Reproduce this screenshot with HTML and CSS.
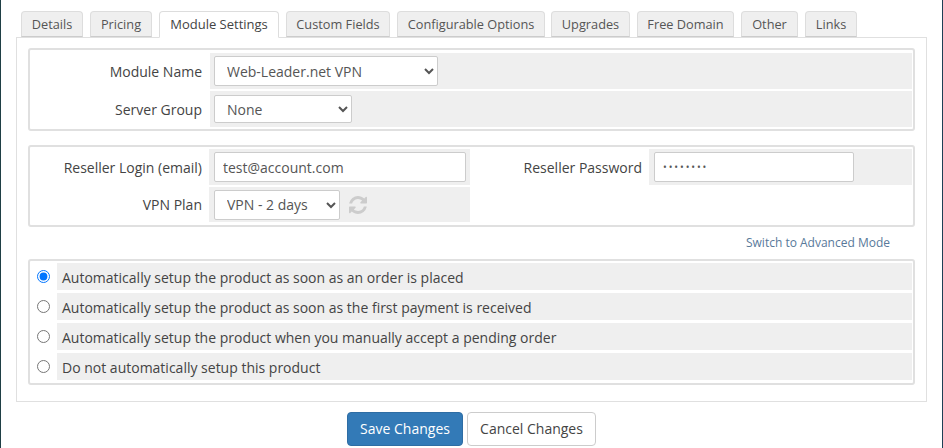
FILE: index.html
```html
<!DOCTYPE html>
<html lang="en">
<head>
<meta charset="utf-8">
<title>Module Settings</title>
<link rel="stylesheet" href="styles.css">
</head>
<body>
<div class="page">
  <ul class="tabs">
    <li class="tab t-details">Details</li>
    <li class="tab t-pricing">Pricing</li>
    <li class="tab active t-module">Module Settings</li>
    <li class="tab t-custom">Custom Fields</li>
    <li class="tab t-config">Configurable Options</li>
    <li class="tab t-upgrades">Upgrades</li>
    <li class="tab t-free">Free Domain</li>
    <li class="tab t-other">Other</li>
    <li class="tab t-links">Links</li>
  </ul>
  <div class="panel">
    <div class="box form-one">
      <div class="label">Module Name</div>
      <div class="field"><select class="sel sel-module"><option>Web-Leader.net VPN</option></select></div>
      <div class="label">Server Group</div>
      <div class="field"><select class="sel sel-group"><option>None</option></select></div>
    </div>
    <div class="box form-two">
      <div class="label">Reseller Login (email)</div>
      <div class="field"><input class="inp inp-login" type="text" value="test@account.com"></div>
      <div class="label">Reseller Password</div>
      <div class="field"><input class="inp inp-pass" type="password" value="password"></div>
      <div class="label">VPN Plan</div>
      <div class="field plan">
        <select class="sel sel-plan"><option>VPN - 2 days</option></select>
        <svg class="refresh" viewBox="0 0 1536 1536" aria-hidden="true"><path d="M1511 928q0 5-1 7-64 268-268 434.500T764 1536q-146 0-282.500-55T238 1324l-129 129q-19 19-45 19t-45-19-19-45V960q0-26 19-45t45-19h448q26 0 45 19t19 45-19 45l-137 137q71 66 161 102t187 36q134 0 250-65t186-179q11-17 53-117 8-23 30-23h192q13 0 22.500 9.500t9.500 22.500zm25-800v448q0 26-19 45t-45 19h-448q-26 0-45-19t-19-45 19-45l138-138Q969 256 768 256q-134 0-250 65T332 500q-11 17-53 117-8 23-30 23H50q-13 0-22.500-9.500T18 608v-7q65-268 270-434.500T768 0q146 0 284 55.500T1297 212l130-129q19-19 45-19t45 19 19 45z"/></svg>
      </div>
    </div>
    <div class="switch"><a href="#">Switch to Advanced Mode</a></div>
    <div class="box radios">
      <div class="r-cell"><input type="radio" name="auto" checked></div>
      <div class="r-text">Automatically setup the product as soon as an order is placed</div>
      <div class="r-cell"><input type="radio" name="auto"></div>
      <div class="r-text">Automatically setup the product as soon as the first payment is received</div>
      <div class="r-cell"><input type="radio" name="auto"></div>
      <div class="r-text">Automatically setup the product when you manually accept a pending order</div>
      <div class="r-cell"><input type="radio" name="auto"></div>
      <div class="r-text">Do not automatically setup this product</div>
    </div>
  </div>
  <div class="actions">
    <button class="btn primary" type="button">Save Changes</button>
    <button class="btn" type="button">Cancel Changes</button>
  </div>
</div>
</body>
</html>
```
FILE: styles.css
```css
* { box-sizing: border-box; }
html, body { margin: 0; padding: 0; height: 100%; background: #fff; overflow: hidden; }
body { font-family: "Open Sans", "Liberation Sans", sans-serif; font-size: 14px; color: #444; }
.page {
  height: 448px;
  border-left: 1px solid #1f3f45;
  border-right: 1px solid #1f3f55;
  padding: 11px 15px 0 15px;
}
.tabs { list-style: none; margin: 0; padding: 0 0 0 5px; display: flex; gap: 7px; height: 27px; position: relative; z-index: 1; }
.tab {
  height: 26px;
  border: 1px solid #ddd;
  border-bottom-color: #ccc;
  border-radius: 4px 4px 0 0;
  background: #efefef;
  color: #555;
  font-size: 12.75px;
  line-height: 25px;
  text-align: center;
}
.tab.active { background: #fff; height: 27px; border-bottom-color: #fff; color: #444; font-size: 13px; }
.t-details { width: 62px; }
.t-pricing { width: 62px; }
.t-module { width: 120px; }
.t-custom { width: 104px; }
.t-config { width: 148px; margin-right: -1px; }
.t-upgrades { width: 79px; }
.t-free { width: 97px; }
.t-other { width: 57px; }
.t-links { width: 52px; }
.panel {
  height: 365px;
  margin-top: -1px;
  border: 1px solid #e0e0e0;
  padding: 10px 11px 0;
}
.box { border: 2px solid #e0e0e0; border-radius: 3px; background: #fff; width: 887px; padding: 3px 1px 0 0; }
.form-one { height: 83px; display: grid; grid-template-columns: 178px 1fr; grid-template-rows: 36px 36px; row-gap: 2px; }
.form-two {
  height: 82px;
  margin-top: 14px;
  padding-top: 2px;
  display: grid;
  grid-template-columns: 177px 263px 177px 1fr;
  grid-template-rows: 36px 35px;
  row-gap: 2px;
}
.label { padding: 0 5px 0 0; display: flex; align-items: center; justify-content: flex-end; }
.form-one .label { padding-right: 6px; }
.field { background: #efefef; margin-left: 2px; display: flex; align-items: center; padding-left: 5px; }
.form-one .field { padding-left: 4px; }
.plan { gap: 9px; }
.sel, .inp {
  font-family: inherit;
  font-size: 14px;
  color: #555;
  border: 1px solid #ccc;
  border-radius: 2px;
  background-color: #fff;
  margin: 0;
}
.sel { padding: 0 0 0 8px; }
.inp { padding: 0 8px; height: 30px; }
.sel-module { width: 224px; height: 30px; }
.sel-group { width: 138px; height: 28px; }
.sel-plan { width: 126px; height: 30px; }
.inp-login { width: 252px; }
.inp-pass { width: 200px; font-size: 10px; letter-spacing: 1.9px; }
.refresh { width: 18px; height: 18px; fill: #ccc; }
.switch { height: 32px; padding-right: 25px; text-align: right; font-size: 12px; line-height: 32px; }
.switch a { color: #58799a; text-decoration: none; }
.radios {
  height: 126px;
  display: grid;
  grid-template-columns: 27px 1fr;
  grid-template-rows: repeat(4, 27px);
  row-gap: 3px;
  padding-top: 2px;
}
.r-cell { display: flex; align-items: center; justify-content: center; padding-bottom: 1px; }
.r-cell input { margin: 0 1px 0 0; width: 13px; height: 13px; }
.r-text { background: #efefef; display: flex; align-items: center; padding: 1px 0 0 5px; }
.actions { display: flex; justify-content: center; gap: 4px; padding-top: 10px; }
.btn {
  font-family: inherit;
  font-size: 14px;
  height: 34px;
  width: 129px;
  border: 1px solid #ccc;
  border-radius: 4px;
  background: #fff;
  color: #444;
  padding: 0 0 2px;
}
.primary { width: 116px; background: #337ab7; border-color: #2e6da4; color: #fff; }
```
